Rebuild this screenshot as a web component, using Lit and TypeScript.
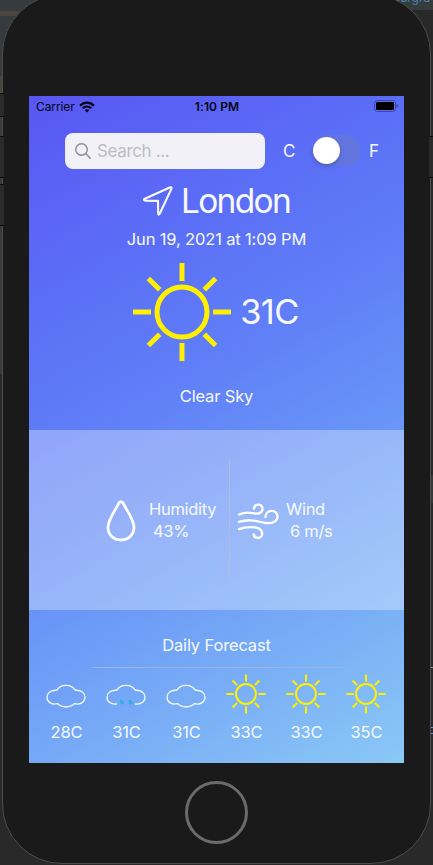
import { LitElement, html, css, svg } from "lit";
import { customElement, property } from "lit/decorators.js";

type Kind = "sun" | "cloud" | "rain";

const RAYS = [0, 45, 90, 135, 180, 225, 270, 315];

@customElement("weather-icon")
class WeatherIcon extends LitElement {
  @property() kind: Kind = "sun";
  @property({ type: Boolean }) large = false;

  static styles = css`
    :host { display: block; width: 40px; height: 40px; }
    :host([large]) { width: 100px; height: 100px; }
    svg { display: block; width: 100%; height: 100%; overflow: visible; }
    .sun { fill: none; stroke: #fff000; }
    .cloud { fill: none; stroke: #f4f8ff; stroke-width: 1.3; stroke-linejoin: round; stroke-linecap: round; }
    .drop { fill: #32ade6; }
  `;

  render() {
    if (this.kind === "sun") {
      return html`<svg viewBox="0 0 100 100">
        <g class="sun" stroke-width="5">
          <circle cx="50" cy="50" r="25"></circle>
          ${RAYS.map((a) => svg`<path d=${a % 90 ? "M50 18.5V2.5" : "M50 19V1"} transform="rotate(${a} 50 50)"></path>`)}
        </g>
      </svg>`;
    }
    if (this.kind === "cloud") {
      return html`<svg viewBox="0 0 40 40">
        <path class="cloud" d="M10.6 16.3C12.6 13 16 11.300 20 11.300s7.400 1.700 9.400 5C35 15.800 39 18.800 39 23.300c0 5-5 7.800-10.400 6.300C26 32 23.200 33 20 33s-6-1-8.600-3.400C6 31.100 1 28.300 1 23.300c0-4.500 4-7.500 9.600-7z"></path>
      </svg>`;
    }
    return html`<svg viewBox="0 0 40 40">
      <path class="cloud" d="M10.600 30C5 30.600 1 27.800 1 23.300c0-4.500 4-7.500 9.600-7C12.600 13 16 11.300 20 11.300s7.400 1.700 9.400 5C35 15.800 39 18.800 39 23.300c0 4.500-4 7.300-9.600 6.700"></path>
      <path class="drop" d="M14.600 25l3 2.500q1.200 2.800-1 3-2.600.1-2.500-2.300zM23.200 25l3 2.500q1.200 2.800-1 3-2.600.1-2.500-2.300z"></path>
    </svg>`;
  }
}

@customElement("app-root")
class AppRoot extends LitElement {
  static styles = css`
    :host {
      display: block; position: relative; width: 433px; height: 865px; overflow: hidden;
      background: #292929; color: #f7f9ff;
      font: 16.5px/22px Inter, "Liberation Sans", sans-serif;
      letter-spacing: -0.15px;
    }
    * { box-sizing: border-box; }
    svg { display: block; overflow: visible; }
    .desk { position: absolute; inset: 0; width: 433px; height: 865px; }
    .behind { position: absolute; left: 393px; top: -10px; font-size: 12px; line-height: 16px; color: #4f83ac; letter-spacing: 0; }
    .phone {
      position: absolute; left: 2px; top: -6px; width: 429px; height: 870px;
      border: 1px solid #4c4d4e; border-radius: 60px; background: #1a1a1a;
      display: flex; flex-direction: column; align-items: center; padding-top: 101px;
    }
    .screen {
      width: 375px; height: 667px; flex: none; display: flex; flex-direction: column;
      background: linear-gradient(150.700deg, #5856f3 0%, #5b6ef6 24%, #5f7ef7 41%, #6996f7 61%, #76aaf6 77%, #8ac8f5 100%);
    }
    .status {
      height: 20px; display: grid; grid-template-columns: 1fr auto 1fr; align-items: center;
      padding: 0 6px 0 7px; color: #050510; font-size: 12px; line-height: 20px; letter-spacing: 0;
    }
    .carrier { display: flex; align-items: center; gap: 4px; letter-spacing: -0.1px; }
    .time { font-weight: 600; letter-spacing: 0.1px; padding-top: 1px; }
    .battery { justify-self: end; margin-top: -1px; }
    .tools { display: flex; align-items: center; height: 36px; margin: 16.500px 0 0 36px; }
    .search {
      width: 200px; height: 36px; border-radius: 8px; background: #f2f1f7;
      display: flex; align-items: center; gap: 6px; padding-left: 10px; color: #bcbcc3; letter-spacing: -0.350px;
    }
    .tools span { font-size: 17px; }
    .unit-c { width: 12px; margin-left: 18px; }
    .switch { width: 49px; height: 31px; border-radius: 16px; background: #6275df; margin: 0 8px 0 17px; padding: 2px 1px; }
    .knob { width: 27px; height: 27px; border-radius: 50%; background: #fff; box-shadow: 0 2px 4px #0003; }
    .city { display: flex; align-items: center; justify-content: center; gap: 8px; height: 42px; margin-top: 11.500px; font-size: 33.500px; letter-spacing: -1.7px; }
    .row { text-align: center; height: 22px; flex: none; }
    .date { margin-top: 6px; }
    .now { display: flex; flex: none; align-items: center; justify-content: center; height: 100px; margin-top: 12px; padding-right: 2px; gap: 8px; font-size: 34.500px; letter-spacing: -0.6px; }
    .sky { margin-top: 23px; }
    .panel {
      height: 180px; flex: none; margin-top: 23px; background: #ffffff50;
      display: flex; align-items: center; padding-left: 77px;
    }
    .metric { display: flex; align-items: center; }
    .metric svg { flex: none; margin-top: 1px; }
    .humidity { width: 123px; gap: 13px; letter-spacing: -0.3px; }
    .wind { padding-left: 7px; gap: 7px; letter-spacing: -0.3px; }
    .rule-v { width: 1px; height: 120px; background: #b1bcdf; }
    .value { padding-left: 4px; }
    .daily { margin-top: 23.500px; }
    .rule-h { width: 250px; height: 1px; flex: none; background: #9ab5e2; margin: 11.500px auto 0 63px; }
    .days { display: flex; padding-left: 7px; margin-top: 5.500px; }
    .day { width: 60px; display: flex; flex-direction: column; align-items: center; gap: 7px; }
    .day span { padding-left: 1px; }
    .home { width: 63px; height: 63px; flex: none; margin-top: 17.500px; border: 3px solid #6b6b6b; border-radius: 50%; }
    .key { position: absolute; left: 0; width: 4px; background: #2a2a2a; border: solid #0b0b0b; border-width: 1px 0; }
    .silent { top: 93px; height: 24px; }
    .vol-up { top: 136px; height: 42px; }
    .vol-down { top: 184px; height: 42px; }
    .power { top: 136px; height: 42px; left: 429px; }
  `;

  days: { kind: Kind; temp: string }[] = [
    { kind: "cloud", temp: "28C" },
    { kind: "rain", temp: "31C" },
    { kind: "cloud", temp: "31C" },
    { kind: "sun", temp: "33C" },
    { kind: "sun", temp: "33C" },
    { kind: "sun", temp: "35C" },
  ];

  render() {
    return html`
      <svg class="desk" viewBox="0 0 433 865">
        <path fill="#363b3e" d="M0 0h60v374H0zM370 0h63v10h-63z"></path>
        <path fill="#4b463d" d="M0 11h24v5H0zM0 76h3v18H0z"></path>
        <path fill="#292929" d="M0 374h3v491H0z"></path>
        <path fill="#363838" d="M430 475h3v28h-3z"></path>
        <path stroke="#8a8a8a" d="M431 667.500h2"></path>
        <path stroke="#4f91da" d="M431 733.500h2M431 727.500h2"></path>
      </svg>
      <div class="behind">ourgra</div>
      <div class="phone">
        <div class="screen">
          <div class="status">
            <div class="carrier">
              <span>Carrier</span>
              <svg width="16" height="12" viewBox="0 0 16 12" fill="none" stroke="#050510" stroke-width="2.200">
                <path d="M1 4.700Q4.200 1.600 8 1.600T15 4.700M3.700 7.300Q5.600 5.500 8 5.500T12.300 7.300"></path>
                <path d="M5.700 9.100Q8 7.300 10.300 9.100L8 11.500z" fill="#050510" stroke="none"></path>
              </svg>
            </div>
            <div class="time">1:10 PM</div>
            <svg class="battery" width="24" height="12" viewBox="0 0 24 12">
              <rect x=".5" y=".5" width="21" height="11" rx="3" fill="none" stroke="#3f42a8"></rect>
              <rect x="2" y="2" width="18" height="8" rx="1.500" fill="#000"></rect>
              <path d="M22.500 4q2 .5 1.500 2 .3 1.500-1.500 2z" fill="#3f42a8"></path>
            </svg>
          </div>
          <div class="tools">
            <div class="search">
              <svg width="16" height="16" viewBox="0 0 16 16" fill="none" stroke="#8b8b90" stroke-width="1.400" stroke-linecap="round">
                <circle cx="6.500" cy="6.500" r="5.800"></circle><path d="M10.800 10.800L15.300 15.300"></path>
              </svg>
              <span>Search ...</span>
            </div>
            <span class="unit-c">C</span>
            <div class="switch"><div class="knob"></div></div>
            <span>F</span>
          </div>
          <div class="city">
            <svg width="30" height="30" viewBox="0 0 30 30" fill="none" stroke="#f7f9ff" stroke-width="2.100" stroke-linejoin="round">
              <path d="M1.300 13L27.300 1.300Q28.900 .9 28.500 2.600L16.600 28Q15.500 29.500 15.200 27.600L15 14.900 2 14.600Q.3 14 1.300 13z"></path>
            </svg>
            <span>London</span>
          </div>
          <div class="row date">Jun 19, 2021 at 1:09 PM</div>
          <div class="now"><weather-icon large kind="sun"></weather-icon><span>31C</span></div>
          <div class="row sky">Clear Sky</div>
          <div class="panel">
            <div class="metric humidity">
              <svg width="30" height="42" viewBox="0 0 30 42" fill="none" stroke="#fff" stroke-width="2.800" stroke-linejoin="round">
                <path d="M13.200 2.700C10 9 2 19.800 2 27.300 2 35 7.800 40 15 40s13-5 13-12.700C28 19.800 20 9 16.800 2.700Q15 .4 13.200 2.700z"></path>
              </svg>
              <div><div>Humidity</div><div class="value">43%</div></div>
            </div>
            <div class="rule-v"></div>
            <div class="metric wind">
              <svg width="42" height="36" viewBox="0 0 42 36" fill="none" stroke="#fff" stroke-width="2.300" stroke-linecap="round">
                <path d="M2 11.500C7 9.200 11 9.100 15.500 10.100 21 11.200 25.500 10.300 25.500 6.100 25.500 .3 17.600 0 17 5.600"></path>
                <path d="M2 18.900C14 15.200 20 18.700 29 20 36 21 40.500 17.600 40.500 13.800 40.500 5.500 28.500 6.300 28.500 14"></path>
                <path d="M2 26.100C8 23.600 13 23.800 18 24.300 27 25.200 27 34.900 21 34.900 18.500 34.900 17 33.300 16.800 31.500"></path>
              </svg>
              <div><div>Wind</div><div class="value">6 m/s</div></div>
            </div>
          </div>
          <div class="row daily">Daily Forecast</div>
          <div class="rule-h"></div>
          <div class="days">
            ${this.days.map((d) => html`<div class="day"><weather-icon kind=${d.kind}></weather-icon><span>${d.temp}</span></div>`)}
          </div>
        </div>
        <div class="home"></div>
      </div>
      <div class="key silent"></div>
      <div class="key vol-up"></div>
      <div class="key vol-down"></div>
      <div class="key power"></div>
    `;
  }
}
